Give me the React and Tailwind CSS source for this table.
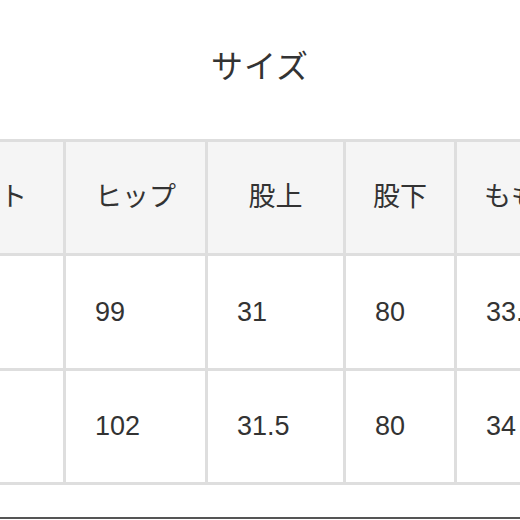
import React from 'react';

const headers = ['ウエスト', 'ヒップ', '股上', '股下', 'もも'];

const rows = [
  ['', '99', '31', '80', '33.5'],
  ['', '102', '31.5', '80', '34'],
];

const SizeTable = () => {
  return (
    <div className="w-[520px] h-[520px] overflow-hidden bg-white text-[#333] font-['Liberation_Sans','Noto_Sans_CJK_JP',sans-serif]">
      {/* Title */}
      <div className="h-[139px] pt-[45px] text-center">
        <h2 className="text-[32px] leading-[44px] font-normal tracking-[1px]">サイズ</h2>
      </div>

      {/* Table */}
      <div className="ml-[-117px] w-max grid grid-cols-[180px_139px_135px_108px_108px] gap-[3px] bg-[#dedede] border-t-[3px] border-b-[3px] border-[#dedede]">
        {headers.map((h) => (
          <div
            key={h}
            className="h-[111px] bg-[#f5f5f5] flex items-center justify-center text-[27px] whitespace-nowrap"
          >
            {h}
          </div>
        ))}
        {rows.map((row, i) =>
          row.map((cell, j) => (
            <div
              key={`${i}-${j}`}
              className={`${i === 0 ? 'h-[112px]' : 'h-[111px]'} bg-white flex items-center pl-[29px] text-[27px]`}
            >
              {cell}
            </div>
          ))
        )}
      </div>

      <div className="h-[32px] bg-white" />
      <div className="h-[2px] bg-[#555]" />
    </div>
  );
};

export default function App() {
  return <SizeTable />;
}
